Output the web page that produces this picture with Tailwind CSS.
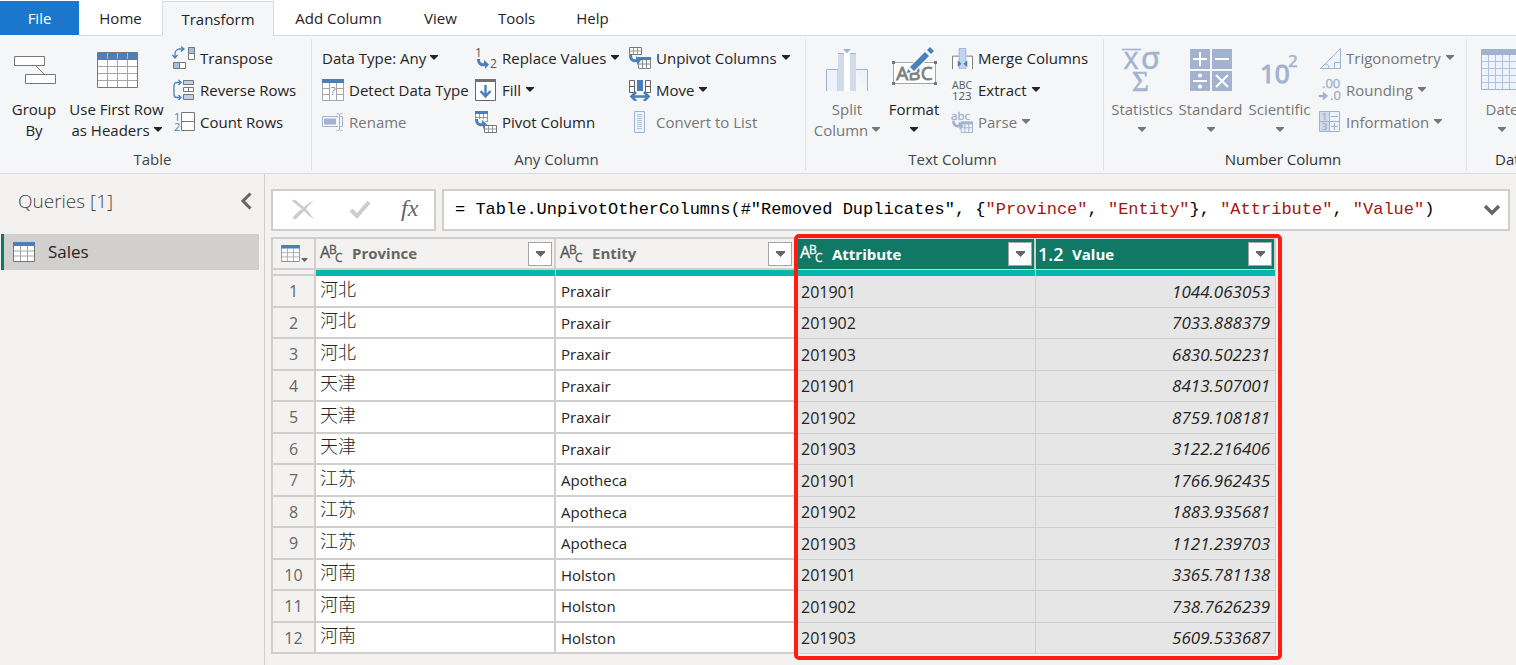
<!DOCTYPE html>
<html lang="en">
<head>
    <meta charset="UTF-8">
    <meta name="viewport" content="width=device-width, initial-scale=1.0">
    <title>Power Query Editor</title>
    <script src="https://cdn.jsdelivr.net/npm/@tailwindcss/browser@4"></script>
</head>
<body class="min-h-screen flex flex-col overflow-x-hidden bg-[#f3f2f1] font-['Open_Sans','Noto_Sans_CJK_SC',sans-serif] text-[15px] text-[#252423]">

<!-- shared shapes -->
<svg class="hidden">
    <symbol id="caret" viewBox="0 0 8 5"><path d="M0 0h8v1L4 5 0 1z" fill="currentColor"/></symbol>
    <symbol id="swoosh" viewBox="0 0 12 10"><path d="M0 0c0 6 4 8 8 7v3l4-4.500L7 1v3C4 5 3 3 3 0z" fill="currentColor"/></symbol>
    <symbol id="table" viewBox="0 0 22 20">
        <path d="M.5.500h21v19H.5z" fill="#fff" stroke="#777"/>
        <path d="M1 9h20M1 14h20M7.500 4v15M14.500 4v15" stroke="#a6a6a6" stroke-width="1"/>
        <path d="M0 0h22v4H0z" fill="#4a7fb9"/>
    </symbol>
    <symbol id="minigrid" viewBox="0 0 13 8">
        <path d="M.5.500h12v7H.5z" fill="#fff" stroke="#777"/><path d="M1 4h11M4.500 1v6M8.500 1v6" stroke="#999"/>
    </symbol>
</svg>

<nav class="flex h-9 pt-px bg-white text-[15px]">
    <button class="w-[79px] h-[34px] bg-[#1b77cb] text-white">File</button>
    <button class="w-[83px] border-b border-[#d8dadd]">Home</button>
    <button class="w-28 border border-b-0 border-[#d8dadd] bg-[#f5f6f8]">Transform</button>
    <button class="w-[129px] border-b border-[#d8dadd]">Add Column</button>
    <button class="w-[75px] border-b border-[#d8dadd]">View</button>
    <button class="w-[77px] border-b border-[#d8dadd]">Tools</button>
    <button class="w-[75px] border-b border-[#d8dadd]">Help</button>
    <div class="flex-1 border-b border-[#d8dadd]"></div>
</nav>

<div class="flex h-[138px] shrink-0 overflow-hidden whitespace-nowrap border-b border-[#d8dadd] bg-[#f5f6f8]">
    <!-- Table -->
    <section class="flex w-[311px] shrink-0 flex-col">
        <div class="flex h-28 pl-1">
            <button class="flex w-[60px] flex-col items-center pt-[10px] leading-[21px]">
                <svg class="mb-[5px] size-12" viewBox="0 0 48 48" fill="#fff" stroke="#777"><path d="M26 20l8 8"/><path d="M4.500 10.500h30v9h-30zM15.500 28.500h30v9h-30z"/></svg>
                <span>Group</span><span>By</span>
            </button>
            <button class="flex w-[105px] flex-col items-center pt-[10px] leading-[21px]">
                <svg class="mb-[5px] size-12" viewBox="0 0 48 48">
                    <path d="M4.500 6.500h40v35h-40z" fill="#fff" stroke="#777"/>
                    <path d="M5 20.500h39M5 27.500h39M5 34.500h39M14.500 13v28M24.500 13v28M34.500 13v28" stroke="#a6a6a6"/>
                    <path d="M5 7h39v6H5z" fill="#4a7fb9"/><path d="M14.500 7v6M24.500 7v6M34.500 7v6" stroke="#a9c3e0"/>
                    <path d="M4 13.500h41" stroke="#777"/>
                </svg>
                <span>Use First Row</span>
                <span class="flex items-center gap-1">as Headers <svg class="mb-[2px] h-[5px] w-2"><use href="#caret"/></svg></span>
            </button>
            <div class="flex flex-col pl-1 pt-[6px]">
                <button class="flex h-8 items-center gap-[5px]">
                    <svg class="size-[22px] overflow-visible" viewBox="0 0 22 22" fill="none">
                        <path d="M2 10V7c0-3 2-5 5-5h3M8-.5l3 2.500-3 2.500M-.5 8 2 11l2.500-3" stroke="#4a7fb9" stroke-width="1.300"/>
                        <path d="M15.500.500h6v6h-6zM.5 15.500h6v6h-6z" fill="#a5bedc" stroke="#777"/><path d="M15.500 6.500h6v6h-6zM6.500 15.500h6v6h-6z" fill="#fff" stroke="#777"/>
                    </svg>Transpose
                </button>
                <button class="flex h-8 items-center gap-[5px]">
                    <svg class="size-[22px]" viewBox="0 0 22 22" fill="none">
                        <path d="M7 3.500H4C2 3.500 1 5 1 6.500v9c0 2 1 3 3 3h4M5.500 1 8 3.500 5.500 6M5.500 16 8 18.500 5.500 21" stroke="#4a7fb9" stroke-width="1.300"/>
                        <path d="M10.500 1.500h10v4h-10zM10.500 15.500h10v5h-10z" fill="#bcd0e8" stroke="#777"/><path d="M10.500 8.500h10v4h-10zM15.500 8.500v4" fill="#fff" stroke="#777"/>
                    </svg>Reverse Rows
                </button>
                <button class="flex h-8 items-center gap-[5px]">
                    <svg class="size-[22px] overflow-visible" viewBox="0 0 22 22">
                        <path d="M8.500 1.500h13v18h-13zM8.500 10.500h13" fill="#fff" stroke="#777"/>
                        <g fill="#4a7fb9" font-size="11"><text x="1" y="10">1</text><text x="1" y="20">2</text></g>
                    </svg>Count Rows
                </button>
            </div>
        </div>
        <h2 class="pr-[6px] text-center leading-[22px] text-[#444]">Table</h2>
    </section>

    <!-- Any Column -->
    <section class="my-[3px] flex w-[494px] shrink-0 flex-col border-l border-[#dfe1e4]">
        <div class="flex h-[109px] pl-[10px] pt-[3px]">
            <div class="flex w-[153px] flex-col">
                <button class="flex h-8 items-center gap-1">Data Type: Any <svg class="mb-[2px] h-[5px] w-2"><use href="#caret"/></svg></button>
                <button class="flex h-8 items-center gap-[5px]">
                    <svg class="size-[22px]" viewBox="0 0 22 22">
                        <path d="M.5.500h21v21H.5zM1 9.500h20M1 15.500h20M7.500 4v17M14.500 4v17" fill="#fff" stroke="#a6a6a6"/>
                        <path d="M8 5h6v16H8z" fill="#fff"/><path d="M0 0h22v4H0z" fill="#4a7fb9"/>
                        <text x="11" y="16" font-size="11" text-anchor="middle" fill="#4a7fb9">?</text>
                    </svg>Detect Data Type
                </button>
                <button class="flex h-8 items-center gap-[5px] text-[#777]">
                    <svg class="size-[22px]" viewBox="0 0 22 22" fill="none" stroke="#a3b3cf"><path d="M16 5.500H.5v10H16M18.500 5.500h2v10h-2"/><path d="M2 7.500h12v6H2z" fill="#a3b3cf" stroke="none"/><path d="M14.500 2.500c2 0 3 0 3 2v13c0 2-1 2-3 2M20.500 2.500c-2 0-3 0-3 2v13c0 2 1 2 3 2"/></svg>Rename
                </button>
            </div>
            <div class="flex w-[154px] flex-col">
                <button class="flex h-8 items-center gap-[5px]">
                    <svg class="size-[22px] overflow-visible" viewBox="0 0 22 22"><g fill="#555" font-size="12"><text x="0" y="10">1</text><text x="15" y="21">2</text></g><use href="#swoosh" x="2" y="12" width="12" height="10" color="#4a7fb9"/></svg>
                    Replace Values <svg class="mb-[2px] h-[5px] w-2"><use href="#caret"/></svg>
                </button>
                <button class="flex h-8 items-center gap-[5px]">
                    <svg class="size-[22px]" viewBox="0 0 22 22"><path d="M.5.500h20v21H.5z" fill="#fff" stroke="#666"/><path d="M0 0h21v3H0z" fill="#707070"/><path d="M10.500 6v11M5.500 12l5 5.500 5-5.500" fill="none" stroke="#4a7fb9" stroke-width="2.400"/></svg>
                    Fill <svg class="mb-[2px] h-[5px] w-2"><use href="#caret"/></svg>
                </button>
                <button class="flex h-8 items-center gap-[5px]">
                    <svg class="size-[22px]" viewBox="0 0 22 22"><path d="M.5.500h12v10H.5zM1 6.500h11M4.500 3v8M8.500 3v8" fill="#fff" stroke="#999"/><path d="M0 0h13v3H0z" fill="#4a7fb9"/><path d="M0 8h10v9H0z" fill="#f5f6f8"/><use href="#swoosh" x="0" y="8" width="12" height="10" color="#4a7fb9"/><use href="#minigrid" x="9" y="14" width="13" height="8"/></svg>Pivot Column
                </button>
            </div>
            <div class="flex flex-col">
                <button class="flex h-8 items-center gap-[5px]">
                    <svg class="size-[22px]" viewBox="0 0 22 22"><use href="#minigrid" width="13" height="8"/><path d="M9.500 12.500h12v9h-12zM10 17h11M13.500 13v8M17.500 13v8" fill="#fff" stroke="#888"/><path d="M9 10h13v3H9z" fill="#4a7fb9"/><use href="#swoosh" x="0" y="8" width="12" height="10" color="#4a7fb9"/></svg>
                    Unpivot Columns <svg class="mb-[2px] h-[5px] w-2"><use href="#caret"/></svg>
                </button>
                <button class="flex h-8 items-center gap-[5px]">
                    <svg class="size-[22px]" viewBox="0 0 22 22"><path d="M.5 1.500h5v12h-5zM.5 7.500h5M16.500 1.500h5v12h-5zM16.500 7.500h5" fill="#fff" stroke="#666"/><path d="M8 1h6v11H8z" fill="#4a7fb9"/><path d="M3 17.500h16M7 13l-4.500 4.500L7 22M15 13l4.500 4.500L15 22" fill="none" stroke="#4a7fb9" stroke-width="2.600"/></svg>
                    Move <svg class="mb-[2px] h-[5px] w-2"><use href="#caret"/></svg>
                </button>
                <button class="flex h-8 items-center gap-[5px] text-[#777]">
                    <svg class="size-[22px]" viewBox="0 0 22 22"><path d="M5.500.500h10v21h-10z" fill="#ebf3fd" stroke="#a3b3cf"/><path d="M8 3.500h5M8 5.500h5M8 7.500h5M8 9.500h5M8 11.500h5M8 13.500h5M8 15.500h5M8 17.500h5" stroke="#b4c3db"/></svg>Convert to List
                </button>
            </div>
        </div>
        <h2 class="pr-1 text-center leading-[22px] text-[#444]">Any Column</h2>
    </section>

    <!-- Text Column -->
    <section class="my-[3px] flex w-[298px] shrink-0 flex-col border-l border-[#dfe1e4]">
        <div class="flex h-[109px] pl-[6px]">
            <button class="flex w-[70px] flex-col items-center pt-[7px] leading-[21px] text-[#777]">
                <svg class="mb-[5px] size-12" viewBox="0 0 48 48">
                    <path d="M3.500 45V23.500H15V45M33 23.500h11.500V45" fill="#ebf3fd" stroke="#a3b3cf"/>
                    <path d="M15 7h6v38h-6zM27 7h6v38h-6z" fill="#d0dcec"/><path d="M21 7h6v38h-6z" fill="#fff"/>
                    <path d="M15 7.500h6M27 7.500h6" stroke="#a3b3cf"/><path d="M20 3h8l-4 4z" fill="#a3b3cf"/>
                </svg>
                <span>Split</span><span class="flex items-center gap-1">Column <svg class="mb-[2px] h-[5px] w-2"><use href="#caret"/></svg></span>
            </button>
            <button class="flex w-16 flex-col items-center pt-[7px] leading-[21px]">
                <svg class="mb-[5px] size-12" viewBox="0 0 48 48">
                    <path d="M3.500 16.500h42v21h-42z" fill="#fff" stroke="#a6a6a6"/>
                    <path d="M2 15h3v3H2zM44 15h3v3h-3zM2 36h3v3H2zM44 36h3v3h-3z" fill="#777"/>
                    <text x="24.500" y="34" text-anchor="middle" font-size="19" fill="#808080" stroke="#808080" stroke-width=".8">ABC</text>
                    <path d="M17 28l2-7L38 2l6 5-19 19z" fill="#f5f6f8"/>
                    <path d="M17 27l1-4 3 3zM20 21 35 6l4 4-15 15zM37 4l3-3 4 4-3 3z" fill="#4a7fb9"/>
                </svg>
                <span>Format</span><span class="flex h-[21px] items-center"><svg class="mb-[2px] h-[5px] w-2"><use href="#caret"/></svg></span>
            </button>
            <div class="flex flex-col pl-[6px] pt-[3px]">
                <button class="flex h-8 items-center gap-[5px]">
                    <svg class="size-[21px]" viewBox="0 0 22 22"><path d="M.5 22V8.500H8V22M15 8.500h6.500V22" fill="#fff" stroke="#777"/><path d="M7.500.500h7V22h-7z" fill="#c3d5ec" stroke="#a3b3cf"/><path d="M6 13l4 3.500L6 20zM16 13l-4 3.500 4 3.500z" fill="#4a7fb9"/></svg>Merge Columns
                </button>
                <button class="flex h-8 items-center gap-[5px]">
                    <svg class="size-[21px] overflow-visible" viewBox="0 0 22 22" fill="#555"><text x="0" y="9" font-size="11">ABC</text><text x="0" y="21" font-size="12">123</text></svg>
                    Extract <svg class="mb-[2px] h-[5px] w-2"><use href="#caret"/></svg>
                </button>
                <button class="flex h-8 items-center gap-[5px] text-[#777]">
                    <svg class="size-[21px] overflow-visible" viewBox="0 0 22 22"><text x="-1" y="8" font-size="12" fill="#a3b3cf" stroke="#a3b3cf" stroke-width=".4">abc</text><path d="M9.500 10.500h12v11h-12zM10 16.500h11M13.500 12v9M17.500 12v9" fill="#ebf3fd" stroke="#a3b3cf"/><path d="M9 10h13v3H9z" fill="#a3b3cf"/><use href="#swoosh" x="0" y="9" width="12" height="10" color="#a3b3cf"/></svg>
                    Parse <svg class="mb-[2px] h-[5px] w-2"><use href="#caret"/></svg>
                </button>
            </div>
        </div>
        <h2 class="pr-1 text-center leading-[22px] text-[#444]">Text Column</h2>
    </section>

    <!-- Number Column -->
    <section class="my-[3px] flex w-[363px] shrink-0 flex-col border-l border-[#dfe1e4]">
        <div class="flex h-[109px] pl-1 text-[#777]">
            <button class="flex w-[68px] flex-col items-center pt-[7px] leading-[21px]">
                <svg class="mb-[5px] size-12" viewBox="0 0 48 48" fill="#a3b3cf" stroke="#a3b3cf" stroke-width=".6">
                    <path d="M4 3h19v1H4z"/><text x="6" y="23" font-size="24" font-family="Noto Sans">X</text><text x="23" y="23" font-size="31" font-family="Noto Sans">σ</text><text x="14" y="45" font-size="29" font-family="Liberation Serif">Σ</text>
                </svg>
                <span>Statistics</span><span class="flex h-[21px] items-center"><svg class="mb-[2px] h-[5px] w-2"><use href="#caret"/></svg></span>
            </button>
            <button class="flex w-[69px] flex-col items-center pt-[7px] leading-[21px]">
                <svg class="mb-[5px] size-12" viewBox="0 0 48 48">
                    <path d="M3 3h20v20H3zM25 3h20v20H25zM3 25h20v20H3zM25 25h20v20H25z" fill="#a3b3cf"/>
                    <path d="M6 13h14M13 6v14M28 13h14M6 35h14M29 29l12 12M41 29 29 41" stroke="#fff" stroke-width="2"/>
                    <circle cx="13" cy="29.500" r="2" fill="#fff"/><circle cx="13" cy="40.500" r="2" fill="#fff"/>
                </svg>
                <span>Standard</span><span class="flex h-[21px] items-center"><svg class="mb-[2px] h-[5px] w-2"><use href="#caret"/></svg></span>
            </button>
            <button class="flex w-[69px] flex-col items-center pt-[7px] leading-[21px]">
                <svg class="mb-[5px] size-12" viewBox="0 0 48 48" fill="#a3b3cf" stroke="#a3b3cf"><text x="4" y="37" font-size="26" stroke-width="1.200">10</text><text x="32" y="21" font-size="17" stroke-width=".5">2</text></svg>
                <span>Scientific</span><span class="flex h-[21px] items-center"><svg class="mb-[2px] h-[5px] w-2"><use href="#caret"/></svg></span>
            </button>
            <div class="flex flex-col pl-[5px] pt-[3px]">
                <button class="flex h-8 items-center gap-[5px]">
                    <svg class="size-[22px]" viewBox="0 0 22 22" fill="#ebf3fd" stroke="#a3b3cf"><path d="M1.500 21.500h20v-20z"/><path d="M15.500 21v-5.500h6M6 17c3 0 4 2 4 4" fill="none"/></svg>
                    Trigonometry <svg class="mb-[2px] h-[5px] w-2"><use href="#caret"/></svg>
                </button>
                <button class="flex h-8 items-center gap-[5px]">
                    <svg class="size-[22px] overflow-visible" viewBox="0 0 22 22" fill="#a3b3cf" stroke="#a3b3cf" stroke-width=".4" font-size="13"><text x="3" y="9">.00</text><text x="11" y="21">.0</text><path d="M0 16h4v-3l5 4-5 4v-3H0z"/></svg>
                    Rounding <svg class="mb-[2px] h-[5px] w-2"><use href="#caret"/></svg>
                </button>
                <button class="flex h-8 items-center gap-[5px]">
                    <svg class="size-[22px]" viewBox="0 0 22 22" fill="#a3b3cf"><path d="M.5.500h20v20H.5z" fill="#ebf3fd" stroke="#a3b3cf"/><path d="M1 1h9v19H1z" fill="#d0dcec"/><path d="M10.500 1v19M1 10.500h19M12 5.500h7M12 15.500h7M15.500 12v7" stroke="#a3b3cf"/><g font-size="9" stroke="#a3b3cf" stroke-width=".4"><text x="3" y="9">1</text><text x="3" y="19">3</text></g></svg>
                    Information <svg class="mb-[2px] h-[5px] w-2"><use href="#caret"/></svg>
                </button>
            </div>
        </div>
        <h2 class="pr-1 text-center leading-[22px] text-[#333]">Number Column</h2>
    </section>

    <!-- Date & Time Column, runs past the window edge -->
    <section class="my-[3px] flex w-52 shrink-0 flex-col border-l border-[#dfe1e4]">
        <div class="flex h-[109px] text-[#777]">
            <button class="flex w-[70px] flex-col items-center pt-[7px] leading-[21px]">
                <svg class="mb-[5px] size-12" viewBox="0 0 48 48">
                    <path d="M3.500 3.500h42v40h-42z" fill="#ebf3fd" stroke="#a3b3cf"/>
                    <path d="M4 15.500h41M4 22.500h41M4 29.500h41M4 36.500h41M10.500 9v34M17.500 9v34M24.500 9v34M31.500 9v34M38.500 9v34" stroke="#b4c3db"/>
                    <path d="M3 3h43v6H3z" fill="#a3b3cf"/>
                </svg>
                <span>Date</span><span class="flex h-[21px] items-center"><svg class="mb-[2px] h-[5px] w-2"><use href="#caret"/></svg></span>
            </button>
        </div>
        <h2 class="pl-7 leading-[22px] text-[#333]">Date &amp; Time Column</h2>
    </section>
</div>

<main class="flex flex-1">
    <aside class="w-[265px] shrink-0 border-r border-[#d1cfcd]">
        <div class="flex h-[60px] items-center justify-between pl-[18px] pr-3 pb-[6px]">
            <h2 class="text-[19px] font-light text-[#444]">Queries [1]</h2>
            <button aria-label="Collapse"><svg class="h-[18px] w-3" viewBox="0 0 12 18"><path d="M10.500 1.500 3 9l7.500 7.500" fill="none" stroke="#666" stroke-width="3"/></svg></button>
        </div>
        <a href="#" class="ml-px mr-[5px] flex h-9 items-center gap-[13px] border-l-3 border-[#117865] bg-[#d2d0ce] pl-[9px] text-[17px]">
            <svg class="h-5 w-[22px]"><use href="#table"/></svg>Sales
        </a>
    </aside>

    <div class="min-w-0 flex-1 pt-[15px] pl-[6px] pr-[6px]">
        <div class="flex h-[42px] gap-[6px]">
            <div class="flex w-[165px] items-center border-2 border-[#d1cfcd] bg-white pl-[18px] gap-[34px]">
                <button aria-label="Cancel"><svg class="h-[22px] w-6" viewBox="0 0 24 22"><path d="M1 2C3-1 6 2 9 5l4 3c3-3 6-5 10-6-3 2-6 5-8 8 3 3 5 6 8 10-4-2-7-5-10-8-3 3-6 6-8 8-3 1-4-1-2-3 2-3 5-5 8-7C7 7 4 4 1 2z" fill="#cdcdcd"/></svg></button>
                <button aria-label="Commit"><svg class="h-5 w-[22px]" viewBox="0 0 22 20"><path d="M2 10l6 6L20 2" fill="none" stroke="#cdcdcd" stroke-width="4"/></svg></button>
                <button class="-ml-1 pb-1 font-['Liberation_Serif',serif] text-[24px] italic text-[#666]" aria-label="Insert step">fx</button>
            </div>
            <div class="flex flex-1 items-center justify-between border-2 border-[#d1cfcd] bg-white pl-[11px] pr-2">
                <div contenteditable="true" role="textbox" aria-label="Formula" class="whitespace-pre font-['Liberation_Mono',monospace] text-[17px] text-black outline-none">= Table.UnpivotOtherColumns(#"Removed Duplicates", {<span class="text-[#a31515]">"Province"</span>, <span class="text-[#a31515]">"Entity"</span>}, <span class="text-[#a31515]">"Attribute"</span>, <span class="text-[#a31515]">"Value"</span>)</div>
                <button aria-label="Expand formula"><svg class="h-3 w-4" viewBox="0 0 16 12"><path d="M1 2l7 7 7-7" fill="none" stroke="#666" stroke-width="3.500"/></svg></button>
            </div>
        </div>

        <div class="relative mt-[6px] w-[1005px]">
            <table class="w-full table-fixed border-separate border-spacing-0 border-l-2 border-t-2 border-[#d1cfcd] text-[16px]">
                <colgroup><col class="w-[43px]"><col class="w-60"><col class="w-60"><col class="w-60"><col class="w-60"></colgroup>
                <thead>
                <tr class="h-[31px] text-left">
                    <th class="border-b-2 border-r-2 border-[#d1cfcd] p-0">
                        <button class="ml-2 flex items-end gap-px text-[#666]" aria-label="Table menu"><svg class="h-[17px] w-[19px]" viewBox="0 0 22 20"><use href="#table"/></svg><svg class="h-1 w-[7px]" viewBox="0 0 8 5"><use href="#caret"/></svg></button>
                    </th>
                    <th class="border-b-2 border-r-2 border-[#d1cfcd] p-0">
                        <div class="flex items-center pl-1 pr-[2px] text-[15px] text-[#666]">
                            <svg class="mr-[10px] h-[18px] w-[22px] overflow-visible font-normal" viewBox="0 0 22 18" fill="#555" stroke="#555" stroke-width=".3"><text x="0" y="13" font-size="16">A</text><text x="9" y="9" font-size="12">B</text><text x="15" y="17" font-size="12">C</text></svg>
                            <span class="flex-1">Province</span>
                            <button class="flex size-6 items-center justify-center border border-[#a6a6a6] bg-white" aria-label="Filter Province"><svg class="h-[6px] w-[11px]" viewBox="0 0 8 5"><use href="#caret"/></svg></button>
                        </div>
                    </th>
                    <th class="border-b-2 border-r-2 border-[#d1cfcd] p-0">
                        <div class="flex items-center pl-1 pr-[2px] text-[15px] text-[#666]">
                            <svg class="mr-[10px] h-[18px] w-[22px] overflow-visible font-normal" viewBox="0 0 22 18" fill="#555" stroke="#555" stroke-width=".3"><text x="0" y="13" font-size="16">A</text><text x="9" y="9" font-size="12">B</text><text x="15" y="17" font-size="12">C</text></svg>
                            <span class="flex-1">Entity</span>
                            <button class="flex size-6 items-center justify-center border border-[#a6a6a6] bg-white" aria-label="Filter Entity"><svg class="h-[6px] w-[11px]" viewBox="0 0 8 5"><use href="#caret"/></svg></button>
                        </div>
                    </th>
                    <th class="border-b border-r-2 border-[#d1cfcd] bg-[#117865] p-0">
                        <div class="flex items-center pl-1 pr-[2px] text-[15px] text-white">
                            <svg class="mr-[10px] h-[18px] w-[22px] overflow-visible font-normal" viewBox="0 0 22 18" fill="#fff" stroke="#fff" stroke-width=".3"><text x="0" y="13" font-size="16">A</text><text x="9" y="9" font-size="12">B</text><text x="15" y="17" font-size="12">C</text></svg>
                            <span class="flex-1">Attribute</span>
                            <button class="flex size-6 items-center justify-center border border-[#a6a6a6] bg-white text-[#666]" aria-label="Filter Attribute"><svg class="h-[6px] w-[11px]" viewBox="0 0 8 5"><use href="#caret"/></svg></button>
                        </div>
                    </th>
                    <th class="border-b border-r-2 border-[#d1cfcd] bg-[#117865] p-0">
                        <div class="flex items-center pl-[2px] pr-[2px] text-[15px] text-white">
                            <span class="w-[34px] text-[18px] leading-6 font-semibold">1.2</span>
                            <span class="flex-1">Value</span>
                            <button class="flex size-6 items-center justify-center border border-[#a6a6a6] bg-white text-[#666]" aria-label="Filter Value"><svg class="h-[6px] w-[11px]" viewBox="0 0 8 5"><use href="#caret"/></svg></button>
                        </div>
                    </th>
                </tr>
                <!-- column quality bar -->
                <tr class="h-[6px]">
                    <td class="border-b-2 border-r-2 border-[#d1cfcd] p-0"></td>
                    <td class="bg-[#01b8aa] border-r border-[#d1cfcd] p-0"></td>
                    <td class="bg-[#01b8aa] p-0"></td>
                    <td class="bg-[#01b8aa] border-r border-[#d1cfcd] p-0"></td>
                    <td class="bg-[#01b8aa] border-r border-[#d1cfcd] p-0"></td>
                </tr>
                </thead>
                <tbody id="rows"></tbody>
            </table>
            <!-- red frame round the unpivoted columns -->
            <div class="pointer-events-none absolute -top-[3px] -right-[6px] -bottom-[6px] left-[523px] rounded-[5px] border-4 border-[#ff1d12]"></div>
        </div>
    </div>
</main>

<script>
    const data = [
        ['河北', 'Praxair', '201901', '1044.063053'],
        ['河北', 'Praxair', '201902', '7033.888379'],
        ['河北', 'Praxair', '201903', '6830.502231'],
        ['天津', 'Praxair', '201901', '8413.507001'],
        ['天津', 'Praxair', '201902', '8759.108181'],
        ['天津', 'Praxair', '201903', '3122.216406'],
        ['江苏', 'Apotheca', '201901', '1766.962435'],
        ['江苏', 'Apotheca', '201902', '1883.935681'],
        ['江苏', 'Apotheca', '201903', '1121.239703'],
        ['河南', 'Holston', '201901', '3365.781138'],
        ['河南', 'Holston', '201902', '738.7626239'],
        ['河南', 'Holston', '201903', '5609.533687'],
    ];

    document.getElementById('rows').innerHTML = data.map((row, i) => `
        <tr class="odd:h-8 even:h-[31px] leading-6">
            <td class="border-b-2 border-r-2 border-[#d1cfcd] p-0 text-center text-[#666]">${i + 1}</td>
            <td class="border-b-2 border-r-2 border-[#d1cfcd] bg-white p-0 pl-1 pb-[7px] text-[18px] leading-5 font-light font-['Noto_Sans_CJK_SC',sans-serif]">${row[0]}</td>
            <td class="border-b-2 border-r-2 border-[#d1cfcd] bg-white p-0 pl-[5px] text-[15px]">${row[1]}</td>
            <td class="border-b border-r border-[#d1cfcd] bg-[#e6e6e6] p-0 pl-[5px]">${row[2]}</td>
            <td class="border-b border-r border-[#d1cfcd] bg-[#e6e6e6] p-0 pr-[5px] text-right text-[17px] italic">${row[3]}</td>
        </tr>
    `).join('');
</script>
</body>
</html>
